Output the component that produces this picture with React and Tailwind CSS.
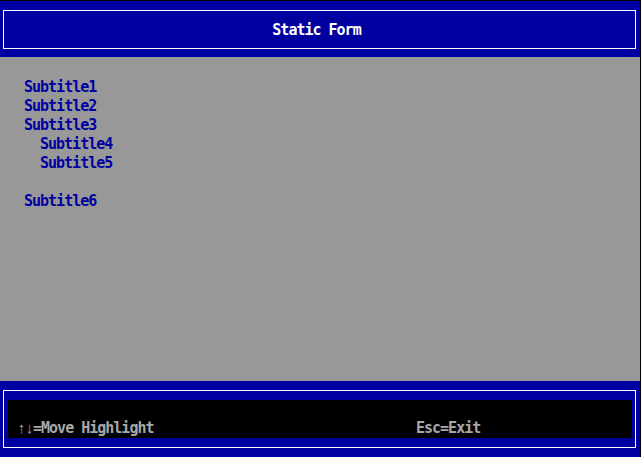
export default function App() {
  const font = "font-['DejaVu_Sans_Mono',monospace] text-[15px] font-bold tracking-[-1px]";
  const items = [
    { label: "Subtitle1", indent: false },
    { label: "Subtitle2", indent: false },
    { label: "Subtitle3", indent: false },
    { label: "Subtitle4", indent: true },
    { label: "Subtitle5", indent: true },
    { label: "", indent: false },
    { label: "Subtitle6", indent: false },
  ];

  return (
    <div className={`flex h-screen w-full flex-col bg-black pt-px pr-px ${font}`}>
      {/* header */}
      <div className="flex h-[56px] flex-col bg-[#0000a0] pt-[9px] pl-[3px] pr-[4px]">
        <div className="flex h-[39px] items-center justify-center border border-white pr-[6px] leading-[16px] text-white">
          Static Form
        </div>
      </div>

      {/* body */}
      <div className="flex-1 bg-[#989898] pt-[21px] pl-[24px] text-[#0000a0]">
        {items.map((item, i) => (
          <div key={i} className={`h-[19px] leading-[19px] ${item.indent ? "pl-[16px]" : ""}`}>
            {item.label}
          </div>
        ))}
      </div>

      {/* footer */}
      <div className="h-[76px] bg-[#0000a0] pt-[9px] pl-[3px] pr-[4px]">
        <div className="h-[58px] border border-white pt-[9px] pl-[4px] pr-[3px]">
          <div className="flex h-[38px] items-end bg-black pb-[2px] leading-[16px] text-[#a8a8a8]">
            <span className="w-[408px] pl-[9px]">
              <span className="font-['Liberation_Mono',monospace] leading-[0px]">↑↓</span>=Move Highlight
            </span>
            <span>Esc=Exit</span>
          </div>
        </div>
      </div>
    </div>
  );
}
